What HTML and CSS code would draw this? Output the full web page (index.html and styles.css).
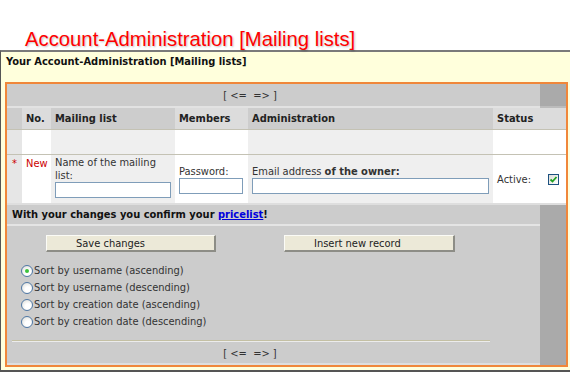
FILE: index.html
```html
<!DOCTYPE html>
<html lang="en">
<head>
    <meta charset="UTF-8">
    <meta name="viewport" content="width=device-width, initial-scale=1.0">
    <title>Account-Administration [Mailing lists]</title>
    <link rel="stylesheet" href="styles.css">
</head>
<body>
    <h1 class="page-title">Account-Administration [Mailing lists]</h1>
    <div class="account-box">
        <div class="box-head">Your Account-Administration [Mailing lists]</div>
        <div class="panel">
            <table class="lists">
                <colgroup>
                    <col class="c-stub">
                    <col class="c-no">
                    <col class="c-name">
                    <col class="c-members">
                    <col class="c-admin">
                    <col class="c-status">
                    <col class="c-side">
                </colgroup>
                <tr class="nav-row">
                    <td colspan="5" class="nav">[ &lt;= &nbsp;=&gt; ]</td>
                    <td></td>
                    <td class="side"></td>
                </tr>
                <tr class="head-row">
                    <th class="dk"></th>
                    <th class="lt">No.</th>
                    <th class="dk">Mailing list</th>
                    <th class="lt">Members</th>
                    <th class="dk">Administration</th>
                    <th class="lt" colspan="2">Status</th>
                </tr>
                <tr class="empty-row">
                    <td class="stub"></td>
                    <td class="w"></td>
                    <td class="g"></td>
                    <td class="w"></td>
                    <td class="g"></td>
                    <td class="w" colspan="2"></td>
                </tr>
                <tr class="new-row">
                    <td class="stub req">*</td>
                    <td class="w new">New</td>
                    <td class="g top">
                        <div class="label">Name of the mailing<br>list:</div>
                        <input type="text" class="field f-name">
                    </td>
                    <td class="w">
                        <div class="label">Password:</div>
                        <input type="password" class="field f-pass">
                    </td>
                    <td class="g">
                        <div class="label">Email address <b>of the owner:</b></div>
                        <input type="text" class="field f-mail">
                    </td>
                    <td class="w">Active:</td>
                    <td class="w check">
                        <span class="checkbox">
                            <svg width="9" height="9" viewBox="0 0 9 9"><path d="M1.5 4.5 L3.5 6.5 L7.5 2" fill="none" stroke="#21a121" stroke-width="1.8"/></svg>
                        </span>
                    </td>
                </tr>
                <tr class="confirm-row">
                    <td colspan="6" class="confirm">With your changes you confirm your <a href="#">pricelist</a>!</td>
                    <td class="side" rowspan="2"></td>
                </tr>
                <tr class="bottom-row">
                    <td colspan="6" class="actions">
                        <div class="buttons">
                            <button class="btn">Save changes</button>
                            <button class="btn btn-wide">Insert new record</button>
                        </div>
                        <div class="sort">
                            <div class="sort-item"><span class="radio on"></span>Sort by username (ascending)</div>
                            <div class="sort-item"><span class="radio"></span>Sort by username (descending)</div>
                            <div class="sort-item"><span class="radio"></span>Sort by creation date (ascending)</div>
                            <div class="sort-item"><span class="radio"></span>Sort by creation date (descending)</div>
                        </div>
                        <div class="rule"></div>
                        <div class="nav nav-bottom">[ &lt;= &nbsp;=&gt; ]</div>
                    </td>
                </tr>
            </table>
        </div>
    </div>
</body>
</html>
```

FILE: styles.css
```css
body {
    margin: 0;
    background: #fff;
    font-family: "DejaVu Sans Condensed", "DejaVu Sans", sans-serif;
    font-size: 11px;
    color: #333;
}
.page-title {
    margin: 0;
    padding: 29px 0 0 25px;
    height: 21px;
    font: normal 20.3px/21px "Liberation Sans", Arial, sans-serif;
    color: #f00;
    text-shadow: 1px 1px 2px rgba(0,0,0,0.25);
}
.account-box {
    background: #ffffdc;
    border-top: 2px solid #7a7a7a;
    border-left: 1px solid #555;
    border-bottom: 2px solid #555;
    padding: 0 0 3px 4px;
}
.box-head {
    height: 30px;
    box-sizing: border-box;
    padding: 3px 0 0 1px;
    line-height: 14px;
    font-weight: bold;
    color: #111;
}
.panel {
    width: 563px;
    box-sizing: border-box;
    border: 2px solid #f0873a;
    background: #ccc;
}
.lists {
    width: 559px;
    table-layout: fixed;
    border-collapse: separate;
    border-spacing: 0;
}
.c-stub { width: 15px; }
.c-no { width: 29px; }
.c-name { width: 124px; }
.c-members { width: 73px; }
.c-admin { width: 245px; }
.c-status { width: 47px; }
.c-side { width: 26px; }

.lists td,
.lists th {
    box-sizing: border-box;
    padding: 0 4px;
    vertical-align: middle;
    text-align: left;
    line-height: 13px;
}
.lists th {
    font-weight: bold;
    color: #222;
}
.side {
    background: #aaa;
}

.nav-row td {
    height: 24px;
    border-bottom: 2px solid #e2e2e2;
}
.nav-row td.side {
    border-bottom-color: #bcbcbc;
}
.nav {
    text-align: center !important;
    color: #333;
}

.head-row th {
    height: 22px;
    border-bottom: 1px solid #c4c2b4;
}
.head-row .dk { background: #cdcdcd; }
.head-row .lt { background: #dcdcdc; }

.empty-row td {
    height: 25px;
    border-bottom: 1px solid #c4c2b4;
}
.new-row td {
    height: 50px;
    border-bottom: 2px solid #dedede;
}
.stub { background: #e6e6e6; }
.w { background: #fff; }
.g { background: #efefef; }

.new-row .top,
.new-row .req,
.new-row .new {
    vertical-align: top;
    padding-top: 1px;
}
.req {
    color: #c00;
    text-align: center !important;
    padding: 2px 0 0 !important;
}
.new {
    color: #c00;
    padding-top: 2px !important;
}
.label {
    line-height: 13px;
}
.field {
    display: block;
    height: 16px;
    box-sizing: border-box;
    margin: 0;
    padding: 0 2px;
    border: 1px solid #7f9db9;
    background: #fff;
    font: inherit;
}
.f-name { width: 116px; }
.f-pass { width: 64px; }
.f-mail { width: 237px; }
.check {
    text-align: center !important;
    padding: 0 !important;
}
.checkbox {
    display: inline-block;
    width: 11px;
    height: 11px;
    box-sizing: border-box;
    border: 1px solid #1c5180;
    background: linear-gradient(135deg, #dcdcd7, #fff);
    vertical-align: middle;
}
.checkbox svg {
    display: block;
}

.confirm-row td {
    height: 21px;
}
.confirm {
    border-bottom: 2px solid #e4e4e4;
    padding-left: 5px !important;
    font-weight: bold;
    color: #111;
}
.confirm a {
    color: #0000dd;
}

.bottom-row td {
    height: 139px;
}
.actions {
    vertical-align: top !important;
    padding: 9px 0 0 !important;
    border-bottom: 2px solid #dedede;
}
.buttons {
    display: flex;
    gap: 68px;
    padding-left: 39px;
}
.btn {
    width: 170px;
    height: 17px;
    box-sizing: border-box;
    padding: 0 0 0 29px;
    text-align: left;
    background: #ece9d8;
    border-style: solid;
    border-width: 1px 2px 2px 1px;
    border-color: #fbfbf6 #8d8d86 #8d8d86 #fbfbf6;
    font: inherit;
    color: #222;
    line-height: 13px;
}
.btn-wide {
    width: 171px;
}
.sort {
    margin-top: 10px;
    padding-left: 14px;
}
.sort-item {
    display: flex;
    align-items: center;
    height: 17px;
}
.radio {
    display: inline-block;
    width: 12px;
    height: 12px;
    box-sizing: border-box;
    margin-right: 1px;
    border: 1px solid #4f78a5;
    border-radius: 50%;
    background: radial-gradient(circle at 60% 65%, #fff 30%, #d8d8d2 100%);
    position: relative;
}
.radio.on::after {
    content: "";
    position: absolute;
    left: 3px;
    top: 3px;
    width: 4px;
    height: 4px;
    border-radius: 50%;
    background: #3cc23c;
}
.rule {
    margin: 10px 0 0 5px;
    width: 478px;
    border-top: 1px solid #c4c0a4;
    border-bottom: 1px solid #ececec;
}
.nav-bottom {
    width: 486px;
    margin-top: 4px;
    line-height: 16px;
}
```
